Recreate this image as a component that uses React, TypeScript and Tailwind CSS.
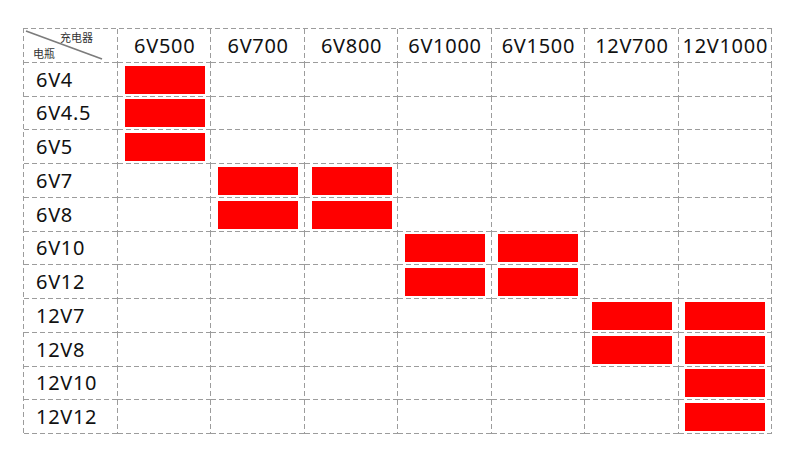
import React from 'react'

const chargers = ['6V500', '6V700', '6V800', '6V1000', '6V1500', '12V700', '12V1000']

const batteries: { name: string; ok: number[] }[] = [
  { name: '6V4', ok: [0] },
  { name: '6V4.5', ok: [0] },
  { name: '6V5', ok: [0] },
  { name: '6V7', ok: [1, 2] },
  { name: '6V8', ok: [1, 2] },
  { name: '6V10', ok: [3, 4] },
  { name: '6V12', ok: [3, 4] },
  { name: '12V7', ok: [5, 6] },
  { name: '12V8', ok: [5, 6] },
  { name: '12V10', ok: [6] },
  { name: '12V12', ok: [6] },
]

// dashed right + bottom edge drawn with gradients (longer dashes than border-dashed)
const cell =
  'flex items-center bg-no-repeat bg-[repeating-linear-gradient(to_bottom,#9c9c9c_0_5px,transparent_5px_8px),repeating-linear-gradient(to_right,#9c9c9c_0_5px,transparent_5px_8px)] bg-[position:right_top,left_bottom] bg-[size:1px_100%,100%_1px]'

export default function App() {
  return (
    <div
      className="w-[790px] h-[462px] bg-white pt-[28px] pl-[23px]"
      style={{ fontFamily: '"Noto Sans", "Noto Sans CJK SC", sans-serif' }}
    >
      <div className="w-[749px] h-[406px] pl-px pt-px grid grid-cols-[94px_repeat(7,1fr)] grid-rows-[repeat(12,1fr)] bg-no-repeat bg-[repeating-linear-gradient(to_bottom,#9c9c9c_0_5px,transparent_5px_8px),repeating-linear-gradient(to_right,#9c9c9c_0_5px,transparent_5px_8px)] bg-[position:left_top,left_top] bg-[size:1px_100%,100%_1px] text-[20px] tracking-[0.7px] text-[#111]">
        {/* corner */}
        <div className={cell + ' relative'}>
          <svg className="absolute inset-0" width="93" height="33">
            <line x1="2" y1="2" x2="78" y2="30" stroke="#7c7c7c" strokeWidth="1.7" />
          </svg>
          <span className="absolute left-[36px] top-[3px] text-[11px] tracking-normal leading-none text-[#333]">充电器</span>
          <span className="absolute left-[9px] top-[19px] text-[11px] tracking-normal leading-none text-[#333]">电瓶</span>
        </div>
        {chargers.map((c) => (
          <div key={c} className={cell + ' justify-center'}>
            {c}
          </div>
        ))}
        {batteries.map((b) => (
          <React.Fragment key={b.name}>
            <div className={cell + ' pl-[12px]'}>{b.name}</div>
            {chargers.map((c, i) => (
              <div key={c} className={cell + ' justify-center'}>
                {b.ok.includes(i) && <div className="w-[80px] h-[28px] bg-[#ff0000]" />}
              </div>
            ))}
          </React.Fragment>
        ))}
      </div>
    </div>
  )
}
